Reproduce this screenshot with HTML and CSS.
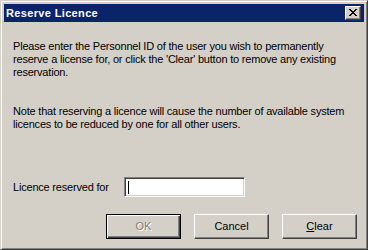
FILE: index.html
```html
<!DOCTYPE html>
<html>
<head>
<meta charset="utf-8">
<link rel="stylesheet" href="styles.css">
</head>
<body>
<div class="window">
  <div class="titlebar">
    <span class="title">Reserve Licence</span>
    <span class="close">
      <svg width="8" height="7" viewBox="0 0 8 7" shape-rendering="crispEdges">
        <path d="M0 0h2v1h-2zM6 0h2v1h-2zM1 1h2v1h-2zM5 1h2v1h-2zM2 2h4v1h-4zM3 3h2v1h-2zM2 4h4v1h-4zM1 5h2v1h-2zM5 5h2v1h-2zM0 6h2v1h-2zM6 6h2v1h-2z" fill="#000"/>
      </svg>
    </span>
  </div>
  <div class="content">
    <p class="para">Please enter the Personnel ID of the user you wish to permanently<br>reserve a license for, or click the 'Clear' button to remove any existing<br>reservation.</p>
    <p class="para note">Note that reserving a licence will cause the number of available system<br>licences to be reduced by one for all other users.</p>
    <div class="field-row">
      <label class="label">Licence reserved for</label>
      <div class="input"><span class="caret"></span></div>
    </div>
    <div class="buttons">
      <div class="btn default disabled"><span>OK</span></div>
      <div class="btn"><span>Cancel</span></div>
      <div class="btn"><span><u>C</u>lear</span></div>
    </div>
  </div>
</div>
</body>
</html>
```
FILE: styles.css
```css
html, body {
  margin: 0;
  padding: 0;
  background: #d4d0c8;
}
body {
  font-family: "Liberation Sans", Arial, sans-serif;
  font-size: 11px;
  color: #000;
}
.window {
  width: 368px;
  height: 250px;
  box-sizing: border-box;
  border-style: solid;
  border-width: 1px;
  border-color: #d4d0c8 #404040 #404040 #d4d0c8;
  box-shadow: inset 1px 1px 0 #ffffff, inset -1px -1px 0 #808080;
  padding: 3px;
  background: #d4d0c8;
  display: flex;
  flex-direction: column;
  overflow: hidden;
}
.titlebar {
  height: 18px;
  flex: none;
  background: #0a246a;
  display: flex;
  align-items: center;
  justify-content: space-between;
  padding: 0 3px 0 2px;
}
.title {
  color: #fff;
  font-weight: bold;
  font-size: 11px;
  letter-spacing: 0.35px;
  line-height: 18px;
}
.close {
  width: 16px;
  height: 14px;
  box-sizing: border-box;
  background: #d4d0c8;
  border-style: solid;
  border-width: 1px;
  border-color: #ffffff #404040 #404040 #ffffff;
  box-shadow: inset -1px -1px 0 #808080;
  display: flex;
  align-items: center;
  justify-content: center;
  padding: 0 1px 1px 0;
}
.close svg { display: block; }
.content {
  flex: 1;
  padding: 18px 7px 0 9px;
  display: flex;
  flex-direction: column;
}
.para {
  margin: 0;
  line-height: 13px;
  white-space: nowrap;
  letter-spacing: -0.2px;
}
.note {
  margin-top: 26px;
}
.field-row {
  margin-top: 46px;
  display: flex;
  align-items: center;
  height: 20px;
  flex: none;
}
.label {
  width: 111px;
  letter-spacing: -0.2px;
}
.input {
  width: 121px;
  height: 20px;
  box-sizing: border-box;
  background: #fff;
  border-style: solid;
  border-width: 1px;
  border-color: #808080 #ffffff #ffffff #808080;
  box-shadow: inset 1px 1px 0 #404040, inset -1px -1px 0 #d4d0c8;
  padding: 3px 0 0 3px;
}
.caret {
  display: block;
  width: 1px;
  height: 13px;
  background: #000;
}
.buttons {
  margin-top: 17px;
  display: flex;
  justify-content: flex-end;
  gap: 13px;
  flex: none;
}
.btn {
  width: 75px;
  height: 25px;
  box-sizing: border-box;
  border-style: solid;
  border-width: 1px;
  border-color: #ffffff #404040 #404040 #ffffff;
  box-shadow: inset -1px -1px 0 #808080;
  display: flex;
  align-items: center;
  justify-content: center;
  padding-bottom: 1px;
}
.btn.default {
  border-color: #000;
  box-shadow: inset 1px 1px 0 #ffffff, inset -1px -1px 0 #404040, inset -2px -2px 0 #808080;
}
.btn.disabled span {
  color: #808080;
  text-shadow: 1px 1px 0 #ffffff;
}
```
